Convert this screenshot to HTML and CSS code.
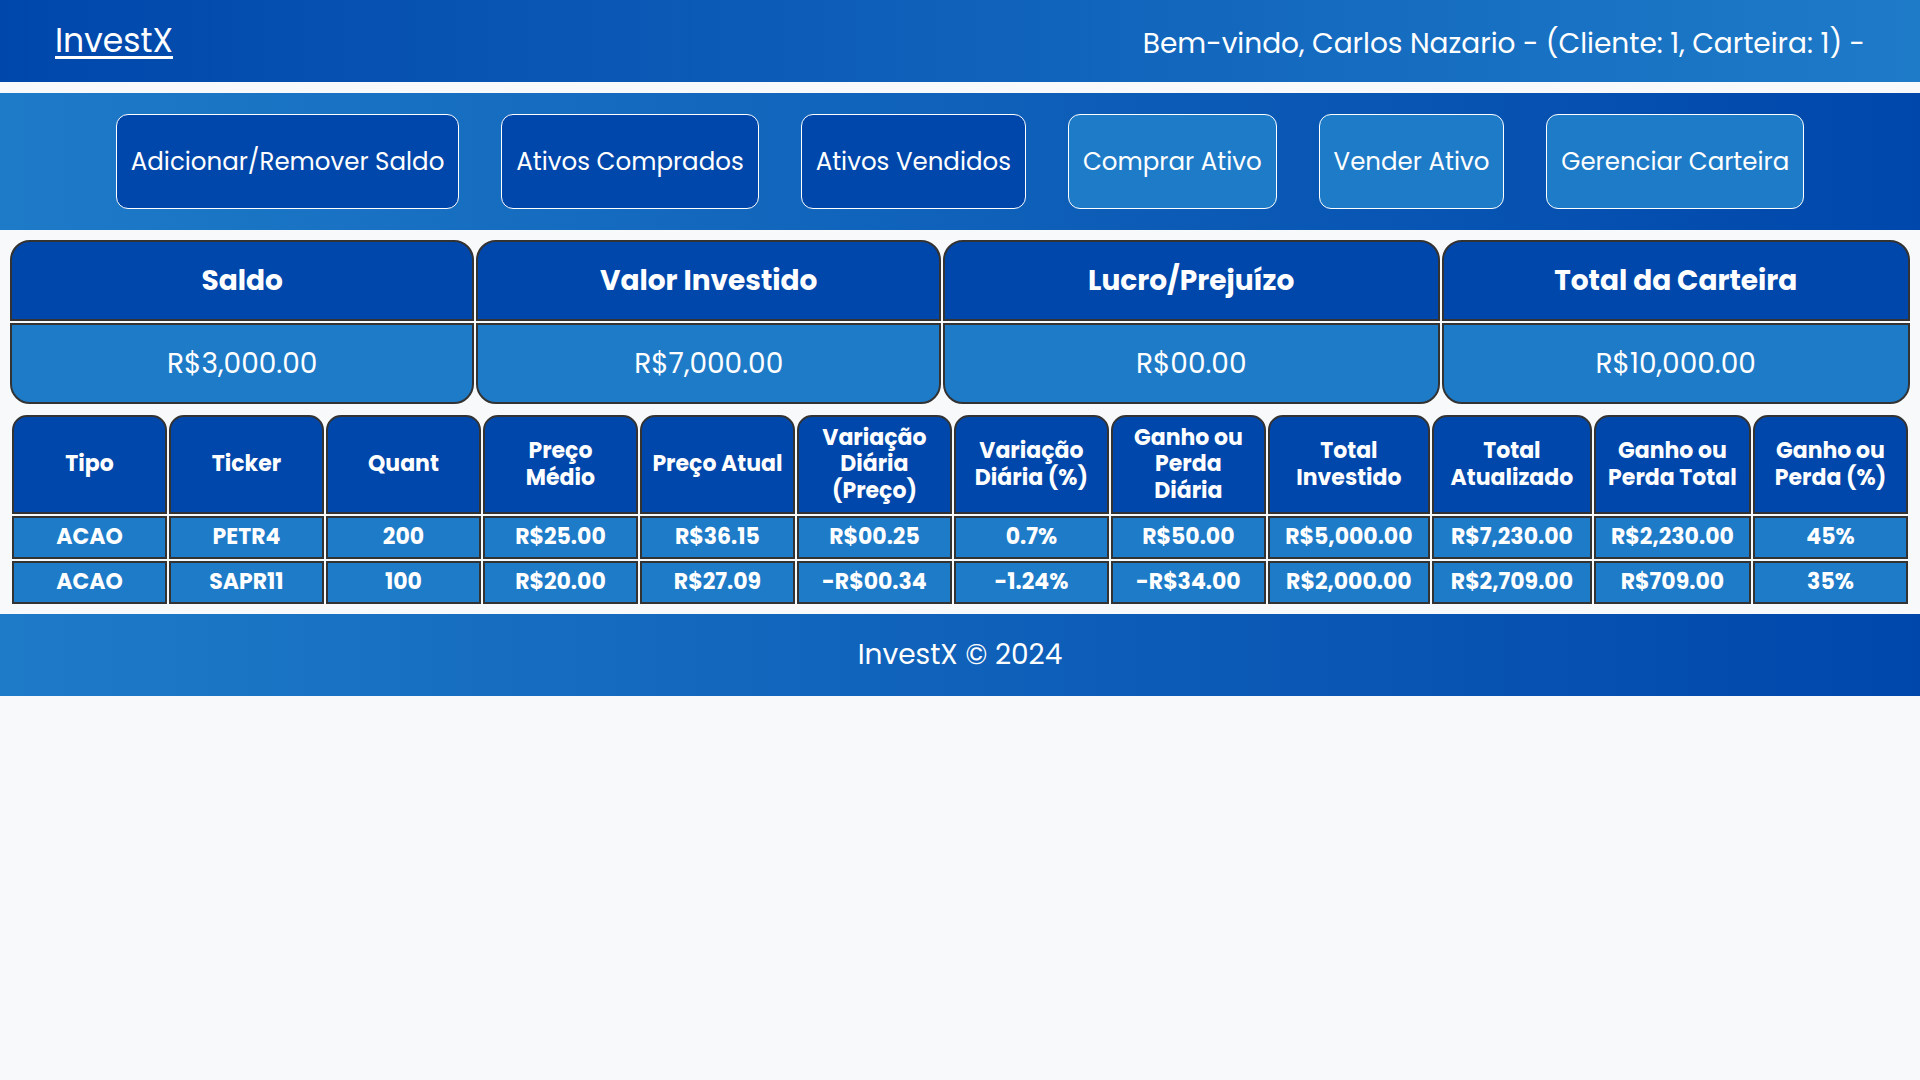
FILE: index.html
```html
<!DOCTYPE html>
<html lang="pt-BR">
<head>
<meta charset="utf-8">
<title>InvestX</title>
<link rel="stylesheet" href="styles.css">
</head>
<body>
<header class="topbar">
  <a class="brand" href="#">InvestX</a>
  <span class="welcome">Bem-vindo, Carlos Nazario - (Cliente: 1, Carteira: 1) -</span>
</header>
<nav class="actions">
  <button class="btn btn-dark">Adicionar/Remover Saldo</button>
  <button class="btn btn-dark">Ativos Comprados</button>
  <button class="btn btn-dark">Ativos Vendidos</button>
  <button class="btn btn-light">Comprar Ativo</button>
  <button class="btn btn-light">Vender Ativo</button>
  <button class="btn btn-light">Gerenciar Carteira</button>
</nav>
<main class="content">
  <table class="summary">
    <colgroup>
      <col class="s1"><col class="s2"><col class="s3"><col class="s4">
    </colgroup>
    <thead>
      <tr><th>Saldo</th><th>Valor Investido</th><th>Lucro/Prejuízo</th><th>Total da Carteira</th></tr>
    </thead>
    <tbody>
      <tr><td>R$3,000.00</td><td>R$7,000.00</td><td>R$00.00</td><td>R$10,000.00</td></tr>
    </tbody>
  </table>
  <table class="positions">
    <colgroup>
      <col class="p"><col class="p"><col class="p"><col class="p"><col class="p"><col class="p"><col class="p"><col class="p"><col class="p9"><col class="p10"><col class="p11"><col class="p">
    </colgroup>
    <thead>
      <tr>
        <th>Tipo</th>
        <th>Ticker</th>
        <th>Quant</th>
        <th>Preço<br>Médio</th>
        <th>Preço Atual</th>
        <th>Variação<br>Diária<br>(Preço)</th>
        <th>Variação<br>Diária (%)</th>
        <th>Ganho ou<br>Perda<br>Diária</th>
        <th>Total<br>Investido</th>
        <th>Total<br>Atualizado</th>
        <th>Ganho ou<br>Perda Total</th>
        <th>Ganho ou<br>Perda (%)</th>
      </tr>
    </thead>
    <tbody>
      <tr>
        <td>ACAO</td><td>PETR4</td><td>200</td><td>R$25.00</td><td>R$36.15</td><td>R$00.25</td><td>0.7%</td><td>R$50.00</td><td>R$5,000.00</td><td>R$7,230.00</td><td>R$2,230.00</td><td>45%</td>
      </tr>
      <tr>
        <td>ACAO</td><td>SAPR11</td><td>100</td><td>R$20.00</td><td>R$27.09</td><td>-R$00.34</td><td>-1.24%</td><td>-R$34.00</td><td>R$2,000.00</td><td>R$2,709.00</td><td>R$709.00</td><td>35%</td>
      </tr>
    </tbody>
  </table>
</main>
<footer class="footer">InvestX © 2024</footer>
</body>
</html>
```
FILE: styles.css
```css
* { box-sizing: border-box; }

body {
  margin: 0;
  background: #f8f9fa;
  font-family: "Poppins", "Open Sans", sans-serif;
  color: #fff;
}

.topbar {
  height: 82px;
  display: flex;
  align-items: center;
  justify-content: space-between;
  padding: 0 55px;
  background: linear-gradient(to right, #0047ab, #1e7bc8);
}

.brand {
  color: #fff;
  font-size: 33px;
  text-decoration: underline;
  text-underline-offset: 4px;
}

.welcome {
  font-size: 28px;
  margin-top: 6px;
}

.actions {
  margin-top: 11px;
  height: 137px;
  display: flex;
  align-items: center;
  justify-content: center;
  gap: 42px;
  background: linear-gradient(to right, #1e7bc8, #0047ab);
}

.btn {
  height: 95px;
  padding: 0 14px;
  border: 1px solid #fff;
  border-radius: 12px;
  color: #fff;
  font-family: inherit;
  font-size: 24.5px;
}

.btn-dark { background: #0047ab; }
.btn-light { background: #1e7bc8; }

.content {
  padding: 8px 8px;
}

.summary,
.positions {
  width: 100%;
  border-collapse: separate;
  border-spacing: 2px;
  table-layout: fixed;
}

.s1 { width: 463px; }
.s2 { width: 463px; }
.s3 { width: 495px; }
.s4 { width: 467px; }

.summary th,
.summary td {
  height: 81px;
  border: 2px solid #333;
  text-align: center;
  font-size: 28px;
}

.summary th {
  background: #0047ab;
  font-weight: 700;
  border-radius: 20px 20px 0 0;
}

.summary td {
  background: #1e7bc8;
  font-weight: 400;
  border-radius: 0 0 20px 20px;
}

.positions {
  width: calc(100% - 4px);
  margin: 7px 2px 0;
}

.p { width: 154px; }
.p9 { width: 161px; }
.p10 { width: 159px; }
.p11 { width: 156px; }

.positions th,
.positions td {
  border: 2px solid #333;
  text-align: center;
  font-size: 22px;
  font-weight: 700;
  line-height: 1.2;
  padding: 0 4px;
}

.positions th {
  height: 99px;
  background: #0047ab;
  border-radius: 15px 15px 0 0;
}

.positions td {
  height: 43px;
  background: #1e7bc8;
}

.footer {
  height: 82px;
  display: flex;
  align-items: center;
  justify-content: center;
  font-size: 28px;
  background: linear-gradient(to right, #1e7bc8, #0047ab);
}
```
